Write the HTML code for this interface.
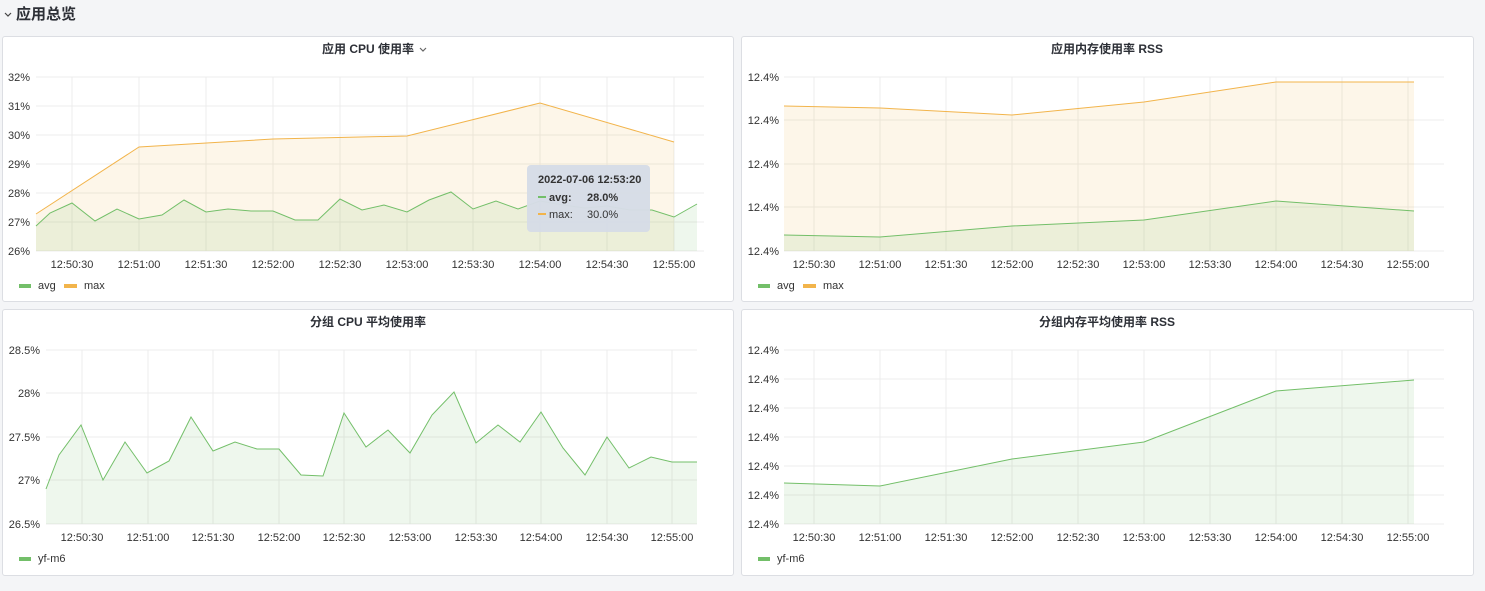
<!DOCTYPE html>
<html><head><meta charset="utf-8"><style>
body{margin:0;width:1485px;height:591px;background:#f4f5f7;font-family:"Liberation Sans","Noto Sans CJK SC",sans-serif;overflow:hidden;position:relative}
.p{position:absolute;background:#fff;border:1px solid #dcdee3;border-radius:3px;box-sizing:border-box}
svg{position:absolute;left:0;top:0}
text{font-family:"Liberation Sans","Noto Sans CJK SC",sans-serif}
</style></head><body>
<div class="p" style="left:2px;top:36px;width:732px;height:266px"></div>
<div class="p" style="left:741px;top:36px;width:733px;height:266px"></div>
<div class="p" style="left:2px;top:309px;width:732px;height:267px"></div>
<div class="p" style="left:741px;top:309px;width:733px;height:267px"></div>
<svg width="1485" height="591" viewBox="0 0 1485 591">
<g fill="none" stroke="#444" stroke-width="1.2"><path d="M5 13l3 3 3-3"/><path d="M420 48l3 3 3-3" stroke="#666"/></g>
<text x="16" y="19" font-size="15" font-weight="bold" fill="#2c2f36">应用总览</text>
<g font-size="12" font-weight="bold" fill="#2c2f36" text-anchor="middle">
<text x="368" y="53">应用 CPU 使用率</text>
<text x="1107" y="53">应用内存使用率 RSS</text>
<text x="368" y="326">分组 CPU 平均使用率</text>
<text x="1107" y="326">分组内存平均使用率 RSS</text>
</g>
<g stroke="#ececec" stroke-width="1">
<path d="M36 77H704M36 106H704M36 135H704M36 164H704M36 193H704M36 222H704M36 251H704"/>
<path d="M72 77V251M139 77V251M206 77V251M273 77V251M340 77V251M407 77V251M473 77V251M540 77V251M607 77V251M674 77V251"/>
<path d="M784 77H1444M784 120H1444M784 164H1444M784 207H1444M784 251H1444"/>
<path d="M814 77V251M880 77V251M946 77V251M1012 77V251M1078 77V251M1144 77V251M1210 77V251M1276 77V251M1342 77V251M1408 77V251"/>
<path d="M46 350H697M46 393H697M46 437H697M46 480H697M46 524H697"/>
<path d="M82 350V524M148 350V524M213 350V524M279 350V524M344 350V524M410 350V524M476 350V524M541 350V524M607 350V524M672 350V524"/>
<path d="M784 350H1444M784 379H1444M784 408H1444M784 437H1444M784 466H1444M784 495H1444M784 524H1444"/>
<path d="M814 350V524M880 350V524M946 350V524M1012 350V524M1078 350V524M1144 350V524M1210 350V524M1276 350V524M1342 350V524M1408 350V524"/>
</g>
<g font-size="11" fill="#333" text-anchor="end">
<text x="30" y="81">32%</text><text x="30" y="110">31%</text><text x="30" y="139">30%</text><text x="30" y="168">29%</text><text x="30" y="197">28%</text><text x="30" y="226">27%</text><text x="30" y="255">26%</text>
<text x="40" y="354">28.5%</text><text x="40" y="397">28%</text><text x="40" y="441">27.5%</text><text x="40" y="484">27%</text><text x="40" y="528">26.5%</text>
<text x="779" y="81">12.4%</text><text x="779" y="124">12.4%</text><text x="779" y="168">12.4%</text><text x="779" y="211">12.4%</text><text x="779" y="255">12.4%</text>
<text x="779" y="354">12.4%</text><text x="779" y="383">12.4%</text><text x="779" y="412">12.4%</text><text x="779" y="441">12.4%</text><text x="779" y="470">12.4%</text><text x="779" y="499">12.4%</text><text x="779" y="528">12.4%</text>
</g>
<g font-size="11" fill="#333" text-anchor="middle">
<text x="72" y="268">12:50:30</text><text x="139" y="268">12:51:00</text><text x="206" y="268">12:51:30</text><text x="273" y="268">12:52:00</text><text x="340" y="268">12:52:30</text><text x="407" y="268">12:53:00</text><text x="473" y="268">12:53:30</text><text x="540" y="268">12:54:00</text><text x="607" y="268">12:54:30</text><text x="674" y="268">12:55:00</text>
<text x="814" y="268">12:50:30</text><text x="880" y="268">12:51:00</text><text x="946" y="268">12:51:30</text><text x="1012" y="268">12:52:00</text><text x="1078" y="268">12:52:30</text><text x="1144" y="268">12:53:00</text><text x="1210" y="268">12:53:30</text><text x="1276" y="268">12:54:00</text><text x="1342" y="268">12:54:30</text><text x="1408" y="268">12:55:00</text>
<text x="82" y="541">12:50:30</text><text x="148" y="541">12:51:00</text><text x="213" y="541">12:51:30</text><text x="279" y="541">12:52:00</text><text x="344" y="541">12:52:30</text><text x="410" y="541">12:53:00</text><text x="476" y="541">12:53:30</text><text x="541" y="541">12:54:00</text><text x="607" y="541">12:54:30</text><text x="672" y="541">12:55:00</text>
<text x="814" y="541">12:50:30</text><text x="880" y="541">12:51:00</text><text x="946" y="541">12:51:30</text><text x="1012" y="541">12:52:00</text><text x="1078" y="541">12:52:30</text><text x="1144" y="541">12:53:00</text><text x="1210" y="541">12:53:30</text><text x="1276" y="541">12:54:00</text><text x="1342" y="541">12:54:30</text><text x="1408" y="541">12:55:00</text>
</g>
<!-- panel1 -->
<path d="M36 214L139 147L273 139L407 136L540 103L674 142V251H36Z" fill="#f2b44b" fill-opacity="0.12"/>
<path d="M36 226L50 213L72 203L95 221L117 209L139 219L162 215L184 200L206 212L228 209L251 211L273 211L295 220L318 220L340 199L362 210L384 205L407 212L429 200L451 192L473 209L496 201L518 209L540 201L563 205L585 208L607 206L630 210L652 210L674 217L697 204V251H36Z" fill="#73bf69" fill-opacity="0.12"/>
<path d="M36 214L139 147L273 139L407 136L540 103L674 142" fill="none" stroke="#f2b44b" stroke-width="1"/>
<path d="M36 226L50 213L72 203L95 221L117 209L139 219L162 215L184 200L206 212L228 209L251 211L273 211L295 220L318 220L340 199L362 210L384 205L407 212L429 200L451 192L473 209L496 201L518 209L540 201L563 205L585 208L607 206L630 210L652 210L674 217L697 204" fill="none" stroke="#73bf69" stroke-width="1"/>
<!-- panel2 -->
<path d="M784 106L880 108L1012 115L1144 102L1276 82L1414 82V251H784Z" fill="#f2b44b" fill-opacity="0.12"/>
<path d="M784 235L880 237L1012 226L1144 220L1276 201L1414 211V251H784Z" fill="#73bf69" fill-opacity="0.12"/>
<path d="M784 106L880 108L1012 115L1144 102L1276 82L1414 82" fill="none" stroke="#f2b44b"/>
<path d="M784 235L880 237L1012 226L1144 220L1276 201L1414 211" fill="none" stroke="#73bf69"/>
<!-- panel3 -->
<path d="M46 489L59 455L81 425L103 480L125 442L147 473L169 461L191 417L213 451L235 442L257 449L279 449L301 475L323 476L344 413L366 447L388 430L410 453L432 415L454 392L476 443L498 425L520 442L541 412L563 448L585 475L607 437L629 468L651 457L672 462L697 462V524H46Z" fill="#73bf69" fill-opacity="0.12"/>
<path d="M46 489L59 455L81 425L103 480L125 442L147 473L169 461L191 417L213 451L235 442L257 449L279 449L301 475L323 476L344 413L366 447L388 430L410 453L432 415L454 392L476 443L498 425L520 442L541 412L563 448L585 475L607 437L629 468L651 457L672 462L697 462" fill="none" stroke="#73bf69"/>
<!-- panel4 -->
<path d="M784 483L880 486L1012 459L1144 442L1276 391L1414 380V524H784Z" fill="#73bf69" fill-opacity="0.12"/>
<path d="M784 483L880 486L1012 459L1144 442L1276 391L1414 380" fill="none" stroke="#73bf69"/>
<!-- legends -->
<g font-size="11" fill="#333">
<rect x="19" y="284" width="12" height="4" fill="#73bf69"/><text x="38" y="289">avg</text>
<rect x="64" y="284" width="13" height="4" fill="#f2b44b"/><text x="84" y="289">max</text>
<rect x="758" y="284" width="12" height="4" fill="#73bf69"/><text x="777" y="289">avg</text>
<rect x="803" y="284" width="13" height="4" fill="#f2b44b"/><text x="823" y="289">max</text>
<rect x="19" y="557" width="12" height="4" fill="#73bf69"/><text x="38" y="562">yf-m6</text>
<rect x="758" y="557" width="12" height="4" fill="#73bf69"/><text x="777" y="562">yf-m6</text>
</g>
<!-- tooltip -->
<rect x="527" y="165" width="123" height="67" rx="4" fill="#d6dce6" fill-opacity="0.97"/>
<g font-size="11" fill="#333">
<text x="538" y="183" font-weight="bold">2022-07-06 12:53:20</text>
<rect x="538" y="196" width="8" height="2" fill="#73bf69"/><text x="549" y="201" font-weight="bold">avg:</text><text x="587" y="201" font-weight="bold">28.0%</text>
<rect x="538" y="213" width="8" height="2" fill="#f2b44b"/><text x="549" y="218">max:</text><text x="587" y="218">30.0%</text>
</g>
</svg>
</body></html>
